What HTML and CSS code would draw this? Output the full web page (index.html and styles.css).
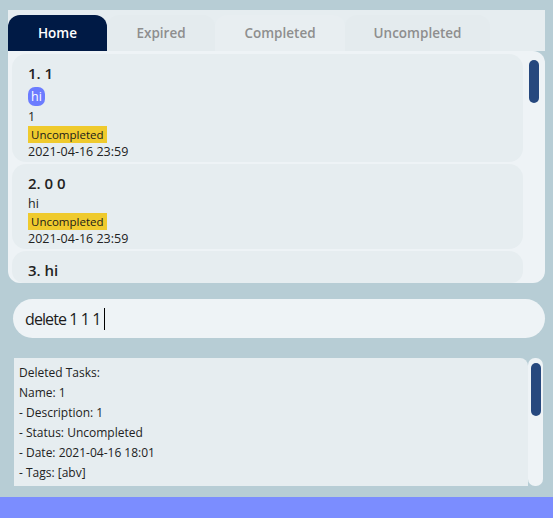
FILE: index.html
```html
<!DOCTYPE html>
<html>
<head>
<meta charset="utf-8">
<link rel="stylesheet" href="styles.css">
</head>
<body>
<div class="app">
  <div class="tabs">
    <div class="tab active t-home">Home</div>
    <div class="tab t-exp">Expired</div>
    <div class="tab t-comp">Completed</div>
    <div class="tab t-unc">Uncompleted</div>
  </div>
  <div class="list-panel">
    <div class="cards">
      <div class="card">
        <div class="title">1. 1</div>
        <div class="tags"><span class="tag">hi</span></div>
        <div class="desc">1</div>
        <div class="status"><span class="badge">Uncompleted</span></div>
        <div class="date">2021-04-16 23:59</div>
      </div>
      <div class="card">
        <div class="title">2. 0 0</div>
        <div class="desc">hi</div>
        <div class="status"><span class="badge">Uncompleted</span></div>
        <div class="date">2021-04-16 23:59</div>
      </div>
      <div class="card last">
        <div class="title">3. hi</div>
      </div>
    </div>
    <div class="track"><div class="thumb"></div></div>
  </div>
  <div class="command">
    <span class="cmd-text">delete 1 1 1</span><span class="caret"></span>
  </div>
  <div class="result">
    <div class="result-text">
      <div>Deleted Tasks:</div>
      <div>Name: 1</div>
      <div>- Description: 1</div>
      <div>- Status: Uncompleted</div>
      <div>- Date: 2021-04-16 18:01</div>
      <div>- Tags: [abv]</div>
    </div>
    <div class="rtrack"><div class="rthumb"></div></div>
  </div>
</div>
<div class="footer"></div>
</body>
</html>
```
FILE: styles.css
```css
html, body {
  margin: 0;
  padding: 0;
}
body {
  background: #b7cdd5;
  font-family: "Open Sans", "Noto Sans", sans-serif;
  color: #1e1e1e;
  width: 553px;
  height: 518px;
  overflow: hidden;
}
.app {
  padding: 10px 8px 0 8px;
  height: 487px;
  box-sizing: border-box;
}
.tabs {
  display: flex;
  align-items: flex-end;
  width: 537px;
  height: 41px;
  background: #e6edf0;
}
.tab {
  height: 36px;
  display: flex;
  align-items: center;
  justify-content: center;
  font-size: 13.5px;
  font-weight: 600;
  color: #8e8e8e;
  box-sizing: border-box;
  border-radius: 12px 12px 0 0;
}
.tab.active {
  background: #001a45;
  color: #ffffff;
}
.t-home { width: 99px; }
.t-exp { width: 108px; background: #e4ebee; }
.t-comp { width: 130px; background: #e8eef1; }
.t-unc { width: 145px; background: #e4ebee; }

.list-panel {
  display: flex;
  width: 537px;
  height: 232px;
  background: #eef3f6;
  border-radius: 0 12px 12px 12px;
  overflow: hidden;
}
.cards {
  width: 515px;
  padding: 3px 0 0 4px;
  box-sizing: border-box;
  display: flex;
  flex-direction: column;
  gap: 2px;
}
.card {
  background: #e6edf0;
  border-radius: 14px;
  padding: 7px 0 1px 16px;
  font-size: 12.5px;
  color: #222;
}
.card.last {
  flex: 1;
  border-radius: 14px 14px 12px 12px;
}
.title {
  font-size: 15px;
  font-weight: 600;
  line-height: 24px;
  color: #222;
}
.tags {
  height: 23px;
  display: flex;
  align-items: center;
}
.tag {
  background: #6b7cff;
  color: #fff;
  border-radius: 7px;
  padding: 0 3px;
  height: 19px;
  line-height: 19px;
  font-size: 12.5px;
}
.desc {
  line-height: 17px;
}
.status {
  height: 18px;
  display: flex;
  align-items: center;
}
.badge {
  background: #efca2d;
  color: #1a1a1a;
  font-size: 11.5px;
  line-height: 17px;
  padding: 0 3px;
}
.date {
  line-height: 18px;
}
.track {
  width: 22px;
  padding-top: 9px;
  display: flex;
  justify-content: center;
}
.thumb {
  width: 10px;
  height: 43px;
  border-radius: 5px;
  background: #26487e;
}

.command {
  margin: 16px 0 0 5px;
  width: 532px;
  height: 39px;
  border-radius: 20px;
  background: #eef3f6;
  display: flex;
  align-items: center;
  padding-left: 12px;
  box-sizing: border-box;
  font-size: 16px;
  color: #1c1c1c;
}
.cmd-text {
  letter-spacing: -0.9px;
}
.caret {
  width: 1px;
  height: 22px;
  background: #000;
  margin-left: 3px;
}

.result {
  margin: 20px 0 0 6px;
  display: flex;
  height: 128px;
}
.result-text {
  width: 514px;
  background: #e6edf0;
  padding: 5px 0 0 5px;
  box-sizing: border-box;
  font-size: 12px;
  line-height: 20px;
  color: #222;
  border-radius: 0 8px 0 0;
}
.rtrack {
  width: 15px;
  background: #eef3f6;
  border-radius: 7px;
  padding-top: 5px;
  box-sizing: border-box;
  display: flex;
  justify-content: center;
}
.rthumb {
  width: 10px;
  height: 53px;
  border-radius: 5px;
  background: #26487e;
}
.footer {
  height: 21px;
  margin-top: 10px;
  background: #7b8dff;
}
```
